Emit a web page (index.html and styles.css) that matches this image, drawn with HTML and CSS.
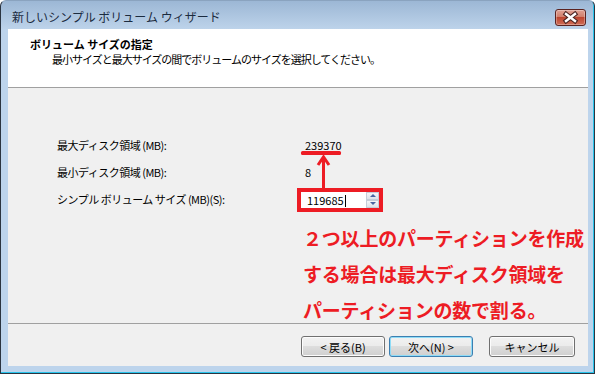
FILE: index.html
```html
<!DOCTYPE html>
<html lang="ja">
<head>
    <meta charset="UTF-8">
    <title>新しいシンプル ボリューム ウィザード</title>
    <link rel="stylesheet" href="styles.css">
</head>
<body>
    <div class="window">
        <div class="titlebar">
            <span class="title">新しいシンプル ボリューム ウィザード</span>
            <button class="close-btn">
                <svg width="31" height="17" viewBox="0 0 31 17">
                    <path d="M11 5 L20 12 M20 5 L11 12" stroke="#4a2422" stroke-width="4.6" stroke-linecap="square" fill="none"/>
                    <path d="M11 5 L20 12 M20 5 L11 12" stroke="#fff" stroke-width="2.4" stroke-linecap="square" fill="none"/>
                </svg>
            </button>
        </div>
        <div class="client">
            <div class="header">
                <div class="header-title">ボリューム サイズの指定</div>
                <div class="header-sub">最小サイズと最大サイズの間でボリュームのサイズを選択してください。</div>
            </div>
            <div class="body">
                <div class="form">
                    <div class="label">最大ディスク領域 (MB):</div>
                    <div class="value">239370</div>
                    <div class="label">最小ディスク領域 (MB):</div>
                    <div class="value">8</div>
                    <div class="label">シンプル ボリューム サイズ (MB)(S):</div>
                    <div class="highlight">
                        <div class="spin">
                            <span class="spin-text">119685<span class="caret"></span></span>
                            <div class="spin-btns">
                                <span class="spin-up"></span>
                                <span class="spin-down"></span>
                            </div>
                        </div>
                    </div>
                </div>
                <!-- paint markup: underline + arrow -->
                <svg class="marker" width="48" height="42" viewBox="0 0 48 42">
                    <rect x="3" y="3" width="40" height="4" rx="1.5" fill="#ed1c24"/>
                    <rect x="24" y="9" width="3" height="32" fill="#ed1c24"/>
                    <polyline points="20,17 25.5,9 31,17" stroke="#ed1c24" stroke-width="3" fill="none"/>
                </svg>
                <p class="note">２つ以上のパーティションを作成<br>する場合は最大ディスク領域を<br>パーティションの数で割る。</p>
            </div>
            <div class="footer">
                <button class="btn">&lt; 戻る(B)</button>
                <button class="btn btn-default">次へ(N) &gt;</button>
                <button class="btn btn-cancel">キャンセル</button>
            </div>
        </div>
    </div>
</body>
</html>
```

FILE: styles.css
```css
body {
    margin: 0;
    background: #fff;
    font-family: "Noto Sans CJK JP", "Noto Sans", sans-serif;
}
.window {
    box-sizing: border-box;
    width: 595px;
    height: 374px;
    border: 1px solid #2b3440;
    border-top-color: #8aa3bf;
    border-radius: 6px 6px 0 0;
    padding: 0 6px 7px 7px;
    background: linear-gradient(#9cb7d5, #bdd3ea 28px, #bdd4ec 28px);
    box-shadow: inset -1px -1px 0 #29c4ec;
    display: flex;
    flex-direction: column;
}
.titlebar {
    height: 28px;
    display: flex;
    align-items: flex-start;
}
.title {
    padding: 8px 0 0 4px;
    font-size: 12px;
    line-height: 16px;
    color: #1b2b3f;
}
.close-btn {
    margin: 8px 2px 0 auto;
    width: 31px;
    height: 17px;
    padding: 0;
    border: 1px solid #5b2320;
    border-radius: 3px;
    background: linear-gradient(#e0a194, #cf7c68 50%, #bd4630 50%, #d06e57);
    box-shadow: inset 0 0 0 1px rgba(255, 255, 255, 0.3);
    display: flex;
    align-items: center;
    justify-content: center;
}
.close-btn svg { margin: -1px; }
.client {
    flex: 1;
    display: flex;
    flex-direction: column;
    background: #f0f0f0;
}
.header {
    box-sizing: border-box;
    height: 59px;
    background: #fff;
    border-bottom: 1px solid #a0a0a0;
    padding: 7px 0 0 22px;
}
.header-title {
    font-size: 11px;
    font-weight: bold;
    line-height: 16px;
    color: #000;
}
.header-sub {
    margin-left: 22px;
    font-size: 11px;
    line-height: 15px;
    letter-spacing: -1px;
    color: #000;
}
.body {
    flex: 1;
    position: relative;
    padding: 43px 0 0 49px;
}
.form {
    display: grid;
    grid-template-columns: 240px auto;
    grid-auto-rows: 27px;
    align-items: center;
    font-size: 11px;
    color: #000;
}
.label { letter-spacing: -0.5px; }
.value { padding-left: 8px; }
.highlight {
    justify-self: start;
    margin-top: 3px;
    border: 4px solid #ed1c24;
}
.spin {
    width: 78px;
    height: 16px;
    background: #fff;
    display: flex;
}
.spin-text {
    flex: 1;
    padding-left: 6px;
    line-height: 16px;
}
.caret {
    display: inline-block;
    width: 1px;
    height: 12px;
    margin-left: 1px;
    background: #000;
    vertical-align: -2px;
}
.spin-btns {
    width: 13px;
    display: flex;
    flex-direction: column;
}
.spin-up, .spin-down {
    flex: 1;
    position: relative;
    background: linear-gradient(#f4f5f7, #dde2e9);
    border: 1px solid #c5cdd8;
}
.spin-up::after, .spin-down::after {
    content: "";
    position: absolute;
    left: 3px;
    top: 1px;
    border-left: 3px solid transparent;
    border-right: 3px solid transparent;
}
.spin-up::after { border-bottom: 3px solid #4a64a0; }
.spin-down::after { border-top: 3px solid #4a64a0; }
.marker {
    position: absolute;
    left: 290px;
    top: 60px;
}
.note {
    position: absolute;
    left: 295px;
    top: 132px;
    margin: 0;
    font-size: 19px;
    font-weight: bold;
    line-height: 36px;
    letter-spacing: -0.2px;
    color: #ed1c24;
    white-space: nowrap;
}
.footer {
    box-sizing: border-box;
    height: 43px;
    border-top: 1px solid #a0a0a0;
    padding: 12px 13px 0 0;
    display: flex;
    justify-content: flex-end;
    align-items: flex-start;
}
.btn {
    width: 84px;
    height: 21px;
    padding: 0;
    border: 1px solid #707070;
    border-radius: 3px;
    background: linear-gradient(#f2f2f2, #ebebeb 50%, #dddddd 50%, #cfcfcf);
    box-shadow: inset 0 0 0 1px #fcfcfc;
    font-family: inherit;
    font-size: 11px;
    color: #000;
}
.btn-default {
    margin-left: 4px;
    border-color: #3c7fb1;
    box-shadow: inset 0 0 0 1px #8fdcf7;
}
.btn-cancel {
    width: 86px;
    margin-left: 16px;
}
```
